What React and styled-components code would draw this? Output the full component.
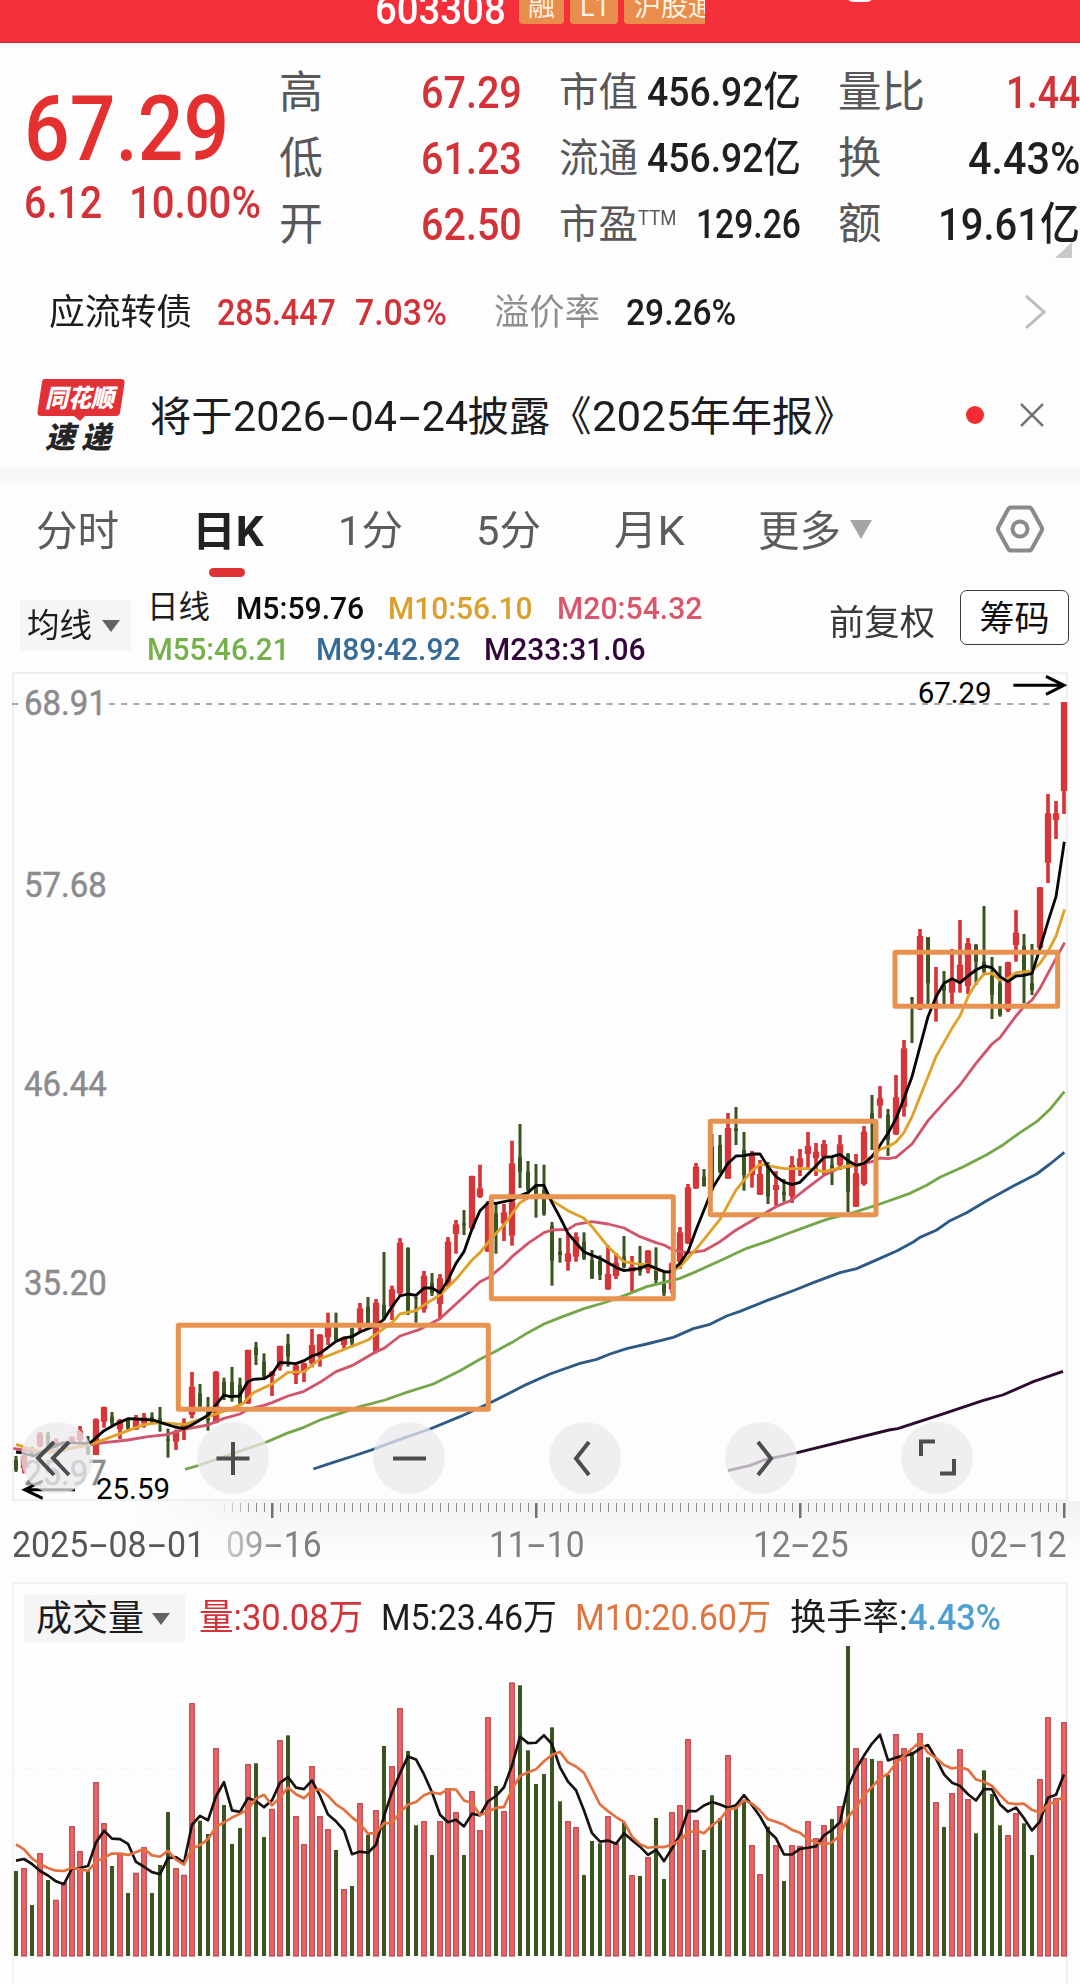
import React, { useLayoutEffect, useRef } from 'react'
import styled, { createGlobalStyle } from 'styled-components'

const GlobalStyle = createGlobalStyle`
  * {
    box-sizing: border-box;
  }
  body {
    margin: 0;
    background: #fdfdfd;
    font-family: Roboto, "Noto Sans CJK SC", sans-serif;
    line-height: 1;
    color: #1d1d1f;
  }
  svg {
    display: block;
  }
`

const RED = '#d23238'
const UP = '#d5363a'
const DOWN = '#3a551f'

/* ---------- text that is squeezed to a given width ---------- */

const FitBox = styled.span`
  display: inline-block;
  flex: none;
  width: ${p => p.$w}px;
  margin-left: ${p => p.$ml || 0}px;
  font-size: ${p => p.$size}px;
  font-weight: ${p => p.$weight || 400};
  color: ${p => p.$color || 'inherit'};
  white-space: nowrap;
`

const FitInner = styled.span`
  display: inline-block;
  transform-origin: 0 50%;
`

function Fit({ w, ml, size, weight, color, children }) {
  const ref = useRef(null)

  useLayoutEffect(() => {
    const el = ref.current
    el.style.transform = `scaleX(${w / el.offsetWidth})`
  }, [w, children])

  return (
    <FitBox $w={w} $ml={ml} $size={size} $weight={weight} $color={color}>
      <FitInner ref={ref}>{children}</FitInner>
    </FitBox>
  )
}

const Dash = styled.span`
  display: inline-block;
  width: 0.6em;
  text-align: center;
  transform: scaleX(1.9);
`

function DateText({ value }) {
  return value.split('-').map((part, i) => (
    <React.Fragment key={i}>
      {i > 0 && <Dash>-</Dash>}
      {part}
    </React.Fragment>
  ))
}

/* ---------- header ---------- */

const Header = styled.header`
  display: flex;
  align-items: flex-end;
  height: 43px;
  padding: 0 0 18px 375px;
  overflow: hidden;
  background: #f52f3a;
  border-bottom: 1px solid #c22c35;
  color: #fff;
`

const Code = styled.div`
  height: 36px;
  margin: 0 13px 0 0;
`

const Tag = styled.div`
  width: ${p => p.$w}px;
  height: 36px;
  margin-right: 6px;
  padding: 4px 0 0 ${p => p.$pad}px;
  overflow: hidden;
  border-radius: 0 0 ${p => (p.$cut ? 0 : 4)}px 4px;
  background: #e88d4c;
  color: #fff4e4;
  font-size: 27px;
  line-height: 31px;
  white-space: nowrap;
`

const Pill = styled.div`
  width: 30px;
  height: 36px;
  margin: 0 0 22px 134px;
  border-radius: 9px;
  background: #fff;
`

/* ---------- quote ---------- */

const Quote = styled.section`
  display: flex;
  height: 227px;
`

const PriceCol = styled.div`
  width: 279px;
  padding: 41px 0 0 24px;
`

const ChangeRow = styled.div`
  display: flex;
  margin-top: 5px;
`

const Stats = styled.div`
  display: grid;
  grid-template-columns: 243px 242px 242px;
  grid-auto-rows: 66px;
  column-gap: 37px;
  padding-top: 16px;
`

const Stat = styled.div`
  display: flex;
  align-items: center;
  justify-content: space-between;
  position: relative;
`

const StatLabel = styled.div`
  display: flex;
  padding-top: 2px;
  font-size: ${p => p.$size}px;
  color: #58585a;
`

const Sup = styled.span`
  align-self: flex-start;
  display: flex;
  padding-top: 3px;
`

const Corner = styled.i`
  position: absolute;
  right: 8px;
  bottom: -1px;
  border-left: 17px solid transparent;
  border-bottom: 16px solid #c9c9cb;
`

/* ---------- bond and news rows ---------- */

const BondRow = styled.section`
  display: flex;
  align-items: center;
  height: 86px;
  padding: 0 34px 0 49px;
`

const NewsRow = styled.section`
  display: flex;
  align-items: center;
  height: 112px;
  padding: 6px 36px 0 36px;
`

const NewsTitle = styled.div`
  display: flex;
  align-items: baseline;
  margin-left: 24px;
  padding-top: 5px;
  font-size: 41.3px;
`

const Push = styled.div`
  margin-left: auto;
`

const Dot = styled.i`
  width: 18px;
  height: 18px;
  margin: 0 36px 0 auto;
  border-radius: 50%;
  background: #f22c30;
`

const Band = styled.div`
  height: 13px;
  background: #f7f7f8;
`

/* ---------- tabs ---------- */

const Tabs = styled.nav`
  display: flex;
  height: 98px;
  padding: 0 36px 0 36px;
  font-size: 41px;
  color: #5c5c5e;
`

const Tab = styled.div`
  position: relative;
  display: flex;
  align-items: center;
  height: 101px;
  margin-left: ${p => p.$ml || 0}px;
  color: ${p => (p.$active ? '#222' : 'inherit')};
`

const Underline = styled.i`
  position: absolute;
  left: 17px;
  bottom: 5px;
  width: 36px;
  height: 9px;
  border-radius: 5px;
  background: #df3034;
`

const Caret = styled.i`
  margin-left: ${p => p.$ml}px;
  margin-top: ${p => p.$mt || 0}px;
  border: ${p => p.$w / 2}px solid transparent;
  border-top: ${p => p.$h}px solid ${p => p.$color};
  border-bottom: 0;
`

const HexBox = styled.div`
  margin: 24px 0 0 auto;
`

/* ---------- moving average bar ---------- */

const MaBar = styled.section`
  display: flex;
  height: 93px;
`

const Picker = styled.div`
  display: flex;
  align-items: center;
  width: ${p => p.$w}px;
  height: ${p => p.$h}px;
  margin: ${p => p.$m};
  padding: 1px 0 0 ${p => p.$pad}px;
  background: #f5f5f6;
`

const MaLines = styled.div`
  width: 698px;
  padding: 13px 0 0 16px;
`

const MaLine = styled.div`
  display: flex;
  align-items: center;
  height: 32px;
  margin-bottom: 9px;
`

const Adjust = styled.div`
  padding-top: 27px;
`

const ChipButton = styled.button`
  display: flex;
  align-items: center;
  justify-content: center;
  width: 109px;
  height: 55px;
  margin: 11px 0 0 25px;
  padding: 4px 0 0;
  border: 1.5px solid #3c3c3e;
  border-radius: 7px;
  background: #fff;
  font: inherit;
  color: #111;
`

/* ---------- chart ---------- */

const Panel = styled.section`
  position: relative;
  width: 1056px;
  height: ${p => p.$h}px;
  margin: 0 12px;
  box-shadow: inset 0 0 0 2px #efeff1;
`

const VolumePanel = styled(Panel)`
  box-shadow: inset 0 2px #f1f1f2, inset 2px 0 #f3f3f4, inset -2px 0 #efeff1;
`

const Controls = styled.div`
  position: absolute;
  left: 9px;
  top: 750px;
  display: flex;
  gap: 104px;
`

const RoundButton = styled.button`
  display: grid;
  place-items: center;
  width: 72px;
  height: 72px;
  padding: 0;
  border: 0;
  border-radius: 50%;
  background: rgba(233, 234, 236, 0.74);
`

const Axis = styled.div`
  height: 81px;
  background: linear-gradient(90deg, #fdfdfd 12%, rgba(253, 253, 253, 0) 26%),
    linear-gradient(#f1f2f3, #fdfdfd 75%);
`

const AxisLabels = styled.div`
  display: flex;
  padding: 6px 0 0 12px;
  color: #808083;
`

const FadeIn = styled.span`
  margin-left: 21px;
  mask-image: linear-gradient(90deg, rgba(0, 0, 0, 0.4), #000 60%);
`

const VolumeHead = styled.div`
  display: flex;
  align-items: center;
  height: 64px;
  padding: 8px 0 0 12px;
`

/* [color, wick top, wick bottom, body top, body bottom], three units to the pixel */
const shift = (dy, rows) => rows.map(([c, ...ys]) => [c, ...ys.map(y => y + dy)])

const candles = [
  ...shift(1800, [
    ['g', 588, 636, 600, 630], ['r', 585, 640, 588, 625], ['g', 560, 588, 565, 580], ['r', 516, 562, 520, 558],
    ['g', 516, 562, 525, 555], ['r', 535, 565, 545, 560], ['r', 545, 575, 550, 570], ['r', 528, 552, 532, 545],
    ['r', 498, 545, 512, 540], ['g', 528, 585, 545, 580], ['r', 475, 585, 478, 585], ['r', 440, 503, 441, 485],
    ['g', 456, 497, 470, 490], ['r', 477, 537, 480, 508], ['g', 475, 510, 480, 505], ['r', 465, 510, 472, 508],
    ['r', 459, 503, 472, 490], ['g', 457, 490, 470, 485], ['g', 441, 515, 475, 490], ['g', 506, 593, 538, 542],
    ['r', 509, 570, 517, 545], ['r', 475, 540, 490, 510], ['r', 336, 475, 380, 465], ['g', 372, 440, 400, 440],
    ['g', 411, 512, 440, 480], ['r', 333, 490, 336, 488], ['g', 353, 420, 366, 410], ['g', 321, 425, 366, 412],
    ['g', 353, 436, 375, 430], ['r', 269, 432, 270, 430], ['g', 246, 315, 262, 285], ['g', 280, 355, 305, 350],
    ['r', 333, 408, 336, 348], ['r', 257, 332, 258, 318], ['g', 222, 320, 252, 290], ['r', 314, 372, 316, 345],
    ['r', 308, 366, 310, 335], ['r', 207, 322, 255, 310], ['r', 222, 320, 224, 290], ['r', 158, 255, 200, 232],
    ['g', 158, 245, 200, 240], ['r', 230, 265, 232, 255], ['g', 203, 262, 205, 250], ['r', 129, 215, 145, 200],
    ['g', 111, 200, 140, 195], ['r', 117, 280, 128, 275],
  ]),
  ...shift(1260, [
    ['g', 516, 718, 675, 715], ['r', 617, 720, 628, 680], ['r', 474, 648, 488, 640], ['g', 502, 705, 504, 700],
    ['g', 650, 728, 652, 656], ['r', 573, 698, 587, 688], ['g', 579, 648, 608, 640], ['r', 582, 716, 595, 672],
    ['r', 471, 620, 485, 615], ['r', 420, 521, 433, 462], ['g', 390, 465, 430, 436], ['r', 287, 450, 288, 445],
    ['r', 254, 354, 325, 350], ['r', 363, 516, 375, 515], ['g', 372, 521, 400, 460], ['r', 372, 483, 397, 430],
    ['r', 182, 497, 250, 467], ['g', 132, 324, 232, 275], ['g', 243, 335, 275, 330], ['g', 252, 413, 320, 350],
    ['g', 254, 407, 330, 402], ['g', 426, 617, 438, 542], ['g', 474, 548, 515, 525], ['r', 459, 572, 520, 545],
    ['r', 457, 545, 470, 530], ['g', 457, 540, 485, 535], ['g', 510, 597, 540, 595], ['g', 526, 600, 542, 585],
    ['r', 496, 630, 582, 628], ['r', 519, 597, 548, 588], ['g', 468, 565, 530, 560], ['r', 528, 635, 560, 575],
    ['g', 498, 587, 550, 575], ['r', 510, 580, 512, 568], ['g', 502, 612, 565, 600], ['g', 570, 648, 610, 640],
    ['r', 547, 640, 550, 628], ['r', 441, 567, 457, 545], ['r', 312, 492, 322, 490], ['r', 249, 327, 260, 325],
    ['g', 267, 320, 290, 318], ['g', 162, 325, 200, 320],
  ]),
  ...shift(1170, [
    ['g', 255, 370, 285, 365], ['r', 189, 387, 234, 386], ['g', 171, 285, 235, 243], ['g', 246, 422, 300, 375],
    ['r', 303, 413, 315, 375], ['r', 330, 435, 372, 434], ['g', 336, 462, 345, 440], ['r', 363, 467, 405, 420],
    ['g', 387, 455, 425, 435], ['r', 318, 459, 345, 438], ['r', 297, 378, 325, 350], ['r', 246, 360, 288, 312],
    ['r', 279, 378, 305, 325], ['r', 270, 375, 282, 320], ['g', 318, 405, 345, 365], ['r', 255, 360, 283, 345],
    ['g', 309, 486, 312, 425], ['r', 312, 471, 370, 470], ['r', 228, 407, 245, 402], ['g', 135, 300, 190, 210],
    ['r', 108, 205, 145, 167], ['g', 177, 318, 195, 270], ['r', 75, 255, 142, 253],
  ]),
  ...shift(0, [
    ['r', 1140, 1370, 1165, 1340], ['g', 1011, 1149, 1014, 1018], ['r', 807, 1050, 828, 1048], ['g', 831, 1035, 832, 970],
    ['r', 921, 1085, 1030, 1045], ['g', 933, 1035, 975, 992], ['r', 867, 1035, 965, 998], ['r', 780, 998, 914, 968],
    ['r', 834, 1002, 850, 978], ['g', 852, 975, 855, 905], ['g', 738, 940, 905, 935], ['g', 891, 1077, 948, 1005],
    ['g', 918, 1070, 970, 1065], ['r', 905, 1056, 907, 1050], ['r', 750, 905, 818, 855], ['g', 822, 1030, 858, 940],
    ['g', 852, 1005, 970, 990], ['r', 681, 865, 682, 863], ['r', 402, 669, 460, 608], ['r', 423, 537, 460, 480],
    ['r', 126, 462, 126, 393],
  ]),
]

const averages = [
  {
    color: '#2d5a85',
    points: '940,2427 1000,2407 1060,2388 1120,2368 1200,2338 1290,2307 1380,2270 1468,2230 1580,2173 1650,2142 1740,2110 1790,2098 1830,2082 1880,2066 1940,2052 2020,2032 2080,2006 2130,1993 2180,1968 2220,1954 2300,1922 2385,1890 2440,1868 2520,1838 2570,1826 2640,1795 2690,1773 2740,1746 2760,1732 2810,1710 2850,1682 2900,1658 2960,1622 3040,1578 3110,1542 3150,1512 3193,1477',
  },
  {
    color: '#74a64a',
    points: '555,2428 600,2415 700,2380 800,2346 860,2320 912,2302 960,2280 1020,2260 1080,2240 1155,2220 1220,2197 1300,2172 1380,2132 1440,2098 1490,2072 1540,2045 1584,2018 1632,1992 1680,1973 1752,1946 1820,1926 1890,1900 1940,1880 2010,1863 2040,1855 2090,1834 2160,1802 2240,1765 2300,1745 2360,1722 2420,1700 2480,1678 2560,1658 2640,1632 2730,1600 2780,1576 2820,1552 2890,1520 2960,1484 3010,1454 3060,1418 3110,1385 3150,1348 3193,1295',
  },
  {
    color: '#d0546b',
    points: '40,2365 80,2372 150,2375 265,2355 312,2348 384,2340 444,2330 500,2324 551,2308 624,2295 672,2275 720,2262 744,2248 792,2236 816,2228 864,2208 912,2194 960,2167 1008,2135 1056,2117 1128,2075 1152,2065 1200,2028 1260,2008 1320,1976 1368,1932 1440,1865 1470,1850 1512,1815 1536,1790 1584,1750 1632,1718 1656,1710 1704,1708 1728,1693 1776,1685 1824,1692 1872,1704 1920,1730 1968,1748 1992,1755 2020,1770 2064,1779 2112,1772 2160,1745 2208,1710 2256,1682 2328,1640 2376,1620 2424,1582 2472,1546 2520,1523 2568,1516 2616,1505 2640,1494 2664,1496 2688,1492 2736,1452 2784,1382 2832,1328 2880,1275 2928,1210 2976,1152 3000,1133 3048,1068 3072,1040 3096,1020 3120,985 3144,940 3168,895 3194,848',
  },
  {
    color: '#dfa127',
    points: '48,2353 75,2362 110,2372 150,2378 190,2370 265,2354 288,2348 336,2330 384,2312 432,2294 480,2288 528,2292 555,2293 600,2278 648,2262 696,2245 730,2230 760,2198 816,2172 864,2137 912,2135 960,2097 1008,2078 1032,2068 1104,2040 1152,2005 1176,1988 1200,1962 1248,1952 1272,1935 1320,1905 1368,1858 1416,1800 1440,1778 1464,1748 1488,1720 1512,1695 1560,1628 1584,1614 1608,1605 1632,1605 1656,1622 1704,1652 1752,1675 1776,1700 1800,1730 1824,1760 1872,1805 1920,1813 1944,1813 1968,1828 2010,1838 2040,1820 2088,1768 2160,1678 2208,1590 2256,1532 2280,1513 2304,1517 2352,1526 2424,1526 2472,1535 2544,1518 2580,1515 2616,1488 2640,1468 2664,1460 2688,1446 2712,1418 2736,1370 2760,1310 2808,1190 2856,1105 2880,1068 2904,1010 2928,970 2952,942 2976,940 3000,960 3024,955 3048,938 3096,933 3120,910 3144,875 3168,828 3194,748',
  },
  {
    color: '#060606',
    points: '48,2376 62,2378 100,2388 150,2365 190,2348 265,2350 275,2345 312,2312 348,2292 385,2276 460,2280 480,2287 525,2301 551,2306 575,2295 624,2266 648,2234 672,2205 690,2210 718,2208 743,2166 760,2158 792,2156 815,2143 840,2107 888,2111 912,2102 936,2088 960,2080 1008,2044 1032,2034 1056,2030 1080,2016 1128,1996 1152,1978 1176,1940 1200,1908 1224,1902 1248,1906 1272,1884 1296,1884 1320,1898 1344,1860 1368,1810 1392,1775 1416,1707 1440,1652 1464,1628 1488,1630 1536,1620 1565,1605 1584,1598 1608,1576 1632,1576 1656,1628 1680,1672 1704,1720 1752,1776 1800,1795 1848,1822 1872,1832 1920,1825 1944,1815 1968,1825 1992,1835 2010,1836 2040,1810 2064,1775 2088,1710 2140,1580 2184,1510 2208,1488 2232,1487 2256,1482 2280,1482 2304,1520 2328,1550 2352,1566 2376,1574 2400,1567 2424,1542 2448,1518 2472,1492 2496,1490 2520,1483 2544,1502 2568,1516 2592,1510 2616,1490 2640,1456 2664,1420 2688,1376 2712,1315 2736,1250 2760,1160 2784,1070 2808,1010 2832,970 2856,956 2880,968 2904,948 2928,930 2952,918 2976,923 3000,950 3024,965 3048,948 3072,946 3096,940 3120,865 3144,785 3168,710 3193,545',
  },
  {
    color: '#2b0a2c',
    points: '2184,2432 2251,2416 2292,2400 2392,2378 2667,2310 2693,2306 2834,2260 2948,2222 3008,2205 3100,2165 3189,2134',
  },
]

const boxes = [
  [528, 1989, 1472, 2255],
  [1467, 1603, 2027, 1923],
  [2124, 1377, 2635, 1671],
  [2678, 870, 3180, 1046],
]

const prices = [
  ['68.91', 165],
  ['57.68', 711],
  ['46.44', 1309],
  ['35.20', 1904],
  ['25.97', 2474],
]

function PriceChart() {
  return (
    <svg width="1056" height="829" viewBox="36 36 3168 2487" fontFamily="Roboto, sans-serif">
      <line x1="36" x2="3165" y1="132" y2="132" stroke="#8c8c8e" strokeWidth="5" strokeDasharray="18 18.4" />
      <rect x="68" y="88" width="256" height="84" fill="#fdfdfd" />
      <g fill="#8b8b8e" stroke="#8b8b8e" strokeWidth="1.5" fontSize="106">
        {prices.map(([label, y]) => (
          <text key={label} x="72" y={y} textLength="248" lengthAdjust="spacingAndGlyphs">{label}</text>
        ))}
      </g>
      {candles.map(([c, top, bottom, bodyTop, bodyBottom], i) => {
        const x = 48 + 24 * i
        const w = c === 'r' ? 19 : 12
        return (
          <g key={i} fill={c === 'r' ? UP : DOWN}>
            <rect x={x - (c === 'r' ? 5.5 : 4.5)} y={top} width={c === 'r' ? 11 : 9} height={bottom - top} />
            <rect x={x - w / 2} y={bodyTop} width={w} height={bodyBottom - bodyTop} />
          </g>
        )
      })}
      {averages.map(line => (
        <polyline key={line.color} points={line.points} fill="none" stroke={line.color} strokeWidth="8.5" strokeLinejoin="round" />
      ))}
      {boxes.map(([x1, y1, x2, y2]) => (
        <rect key={x1} x={x1 + 7} y={y1 + 7} width={x2 - x1 - 14} height={y2 - y1 - 14} rx="2" fill="none" stroke="#e8924f" strokeWidth="15" />
      ))}
      <g fill="#000" fontSize="90">
        <text x="2753" y="130" textLength="222" lengthAdjust="spacingAndGlyphs">67.29</text>
        <text x="288" y="2518" textLength="222" lengthAdjust="spacingAndGlyphs">25.59</text>
      </g>
      <g fill="none" stroke="#000" strokeWidth="9">
        <path d="M3040 76h150M3138 49l54 27-54 27" />
        <path d="M225 2489H76M128 2463l-54 26 54 26" />
      </g>
    </svg>
  )
}

/* bar tops, measured down from the top of the volume panel */
const volumes = (
  'g903 r895 g1005 r850 g930 r990 r938 r769 r844 g900 r637 r760 g888 r853 g969 r909 r832 g969 g885 g726 r895 r915 ' +
  'r400 g752 g792 r535 g705 g822 g774 r583 g580 g801 r717 r511 g496 r739 r823 r589 r739 r778 g840 r958 g948 r700 ' +
  'g795 r721 g528 r589 r415 g543 g766 r754 g855 r754 r655 r727 g855 r664 r781 r442 g648 r724 r338 g346 g541 g642 ' +
  'g612 g472 g694 r754 r772 g915 g813 g820 r739 r820 g757 r916 g918 r862 g744 g927 r727 r706 r508 r751 g840 g676 ' +
  'g744 r556 g712 g690 r826 r913 g770 r826 g933 r826 r828 r754 r805 r766 g747 r709 g228 r535 r565 g567 r574 g615 ' +
  'r493 r535 g545 r490 g562 r697 g771 r670 r538 r688 g790 g601 g672 g766 r796 r730 g760 g855 r628 r442 r685 r457'
).split(' ').map(s => ({ up: s[0] === 'r', y: Number(s.slice(1)) }))

const movingAverage = (n, lead) =>
  volumes
    .map((v, i) => {
      const y = i < lead.length ? lead[i] : volumes.slice(i - n + 1, i + 1).reduce((sum, d) => sum + d.y, 0) / n
      return `${48 + 24 * i},${y.toFixed(1)}`
    })
    .join(' ')

const volumeMa5 = movingAverage(5, [872, 867, 882, 903])
const volumeMa10 = movingAverage(10, [823, 838, 865, 882, 894, 902, 903, 893, 898])

function VolumeChart() {
  return (
    <svg width="1056" height="311" viewBox="36 228 3168 933">
      <line x1="36" x2="3204" y1="596" y2="596" stroke="#f4f4f4" strokeWidth="3" strokeDasharray="18 18" />
      {volumes.map((v, i) => {
        const x = 48 + 24 * i
        return v.up
          ? <rect key={i} x={x - 7} y={v.y + 1} width="14" height={1157 - v.y} fill="#ee6462" stroke="#b34a50" strokeWidth="3.5" />
          : <rect key={i} x={x - 6} y={v.y} width="12" height={1158 - v.y} fill={DOWN} />
      })}
      <polyline points={volumeMa5} fill="none" stroke="#17110f" strokeWidth="8" strokeLinejoin="round" />
      <polyline points={volumeMa10} fill="none" stroke="#e4703f" strokeWidth="8" strokeLinejoin="round" />
    </svg>
  )
}

function AxisTicks() {
  const ticks = []
  for (let i = 26; i < 132; i++) {
    const major = i % 33 === 32
    ticks.push(
      <rect
        key={i}
        x={16 + 8 * i - (major ? 1 : 0)}
        y="2"
        width={major ? 2.5 : 1}
        height={major ? 15 : 9}
        fill={major ? '#707073' : '#8b8b8e'}
        opacity={major ? 1 : Math.min(1, (i - 25) / 5)}
      />
    )
  }
  return <svg width="1080" height="20">{ticks}</svg>
}

const controlPaths = [
  'M21 3L5 19l16 17M36 3L20 19l16 17',
  'M24 3v33M7.500 19.500h33',
  'M8 19.500h33',
  'M28 3L15 19.500 28 36',
  'M21 3l13 16.500L21 36',
  'M8 17V2.500h14M41 20v14.500H27',
]

function Logo() {
  return (
    <svg width="90" height="74" viewBox="0 0 90 74">
      <path d="M8 1h77q4 0 3.500 4l-4.500 30q-.6 3-4 3H49l-5 5-6-5H5q-4 0-3.500-4L6 4q.5-3 2-3z" fill="#e23136" />
      <g fontFamily="Noto Sans CJK SC, sans-serif" fontWeight="900" fontStyle="italic">
        <text x="9" y="29" fontSize="25" fill="#fff" textLength="69" lengthAdjust="spacingAndGlyphs">同花顺</text>
        <text x="9" y="70" fontSize="30" fill="#242426" textLength="66">速递</text>
      </g>
    </svg>
  )
}

const stats = [
  { label: '高', value: '67.29', w: 101, red: true },
  { label: '市值', value: '456.92亿', w: 154 },
  { label: '量比', value: '1.44', w: 74, red: true },
  { label: '低', value: '61.23', w: 101, red: true },
  { label: '流通', value: '456.92亿', w: 154 },
  { label: '换', value: '4.43%', w: 112 },
  { label: '开', value: '62.50', w: 101, red: true },
  { label: '市盈', sup: 'TTM', value: '129.26', w: 105 },
  { label: '额', value: '19.61亿', w: 142, corner: true },
]

export default function App() {
  return (
    <>
      <GlobalStyle />
      <Header>
        <Code><Fit w={131} size={43} weight={500}>603308</Fit></Code>
        <Tag $w={45} $pad={9}>融</Tag>
        <Tag $w={48} $pad={10}>L1</Tag>
        <Tag $w={81} $pad={10} $cut>沪股通</Tag>
        <Pill />
      </Header>

      <Quote>
        <PriceCol>
          <Fit w={205} size={91} weight={500} color="#e4302f">67.29</Fit>
          <ChangeRow>
            <Fit w={78} size={45} weight={500} color={RED}>6.12</Fit>
            <Fit w={132} ml={27} size={45} weight={500} color={RED}>10.00%</Fit>
          </ChangeRow>
        </PriceCol>
        <Stats>
          {stats.map((s, i) => (
            <Stat key={i}>
              <StatLabel $size={[44, 39.5, 43.5][i % 3]}>
                {s.label}
                {s.sup && <Sup><Fit w={38} size={20}>{s.sup}</Fit></Sup>}
              </StatLabel>
              <Fit w={s.w} size={i % 3 === 1 ? 41 : 45} weight={500} color={s.red ? RED : '#1f1f21'}>{s.value}</Fit>
              {s.corner && <Corner />}
            </Stat>
          ))}
        </Stats>
      </Quote>

      <BondRow>
        <Fit w={143} size={36}>应流转债</Fit>
        <Fit w={119} ml={25} size={36} weight={500} color={RED}>285.447</Fit>
        <Fit w={92} ml={19} size={36} weight={500} color={RED}>7.03%</Fit>
        <Fit w={106} ml={47} size={36} color="#8e8e90">溢价率</Fit>
        <Fit w={110} ml={26} size={36} weight={500}>29.26%</Fit>
        <Push>
          <svg width="22" height="36" fill="none" stroke="#bdbdbf" strokeWidth="3"><path d="M2 1l18 16L2 33" /></svg>
        </Push>
      </BondRow>

      <NewsRow>
        <Logo />
        <NewsTitle>
          将于<Fit w={235} size={42}><DateText value="2026-04-24" /></Fit>披露《<Fit w={98} size={42}>2025</Fit>年年报》
        </NewsTitle>
        <Dot />
        <svg width="24" height="24" stroke="#77777a" strokeWidth="2.500"><path d="M1 1l22 22M23 1L1 23" /></svg>
      </NewsRow>

      <Band />

      <Tabs>
        <Tab>
          <Fit w={83} size={42}>分时</Fit>
        </Tab>
        <Tab $ml={73} $active>
          <Fit w={72} size={42} weight={700}>日K</Fit>
          <Underline />
        </Tab>
        <Tab $ml={74}><Fit w={65} size={41}>1分</Fit></Tab>
        <Tab $ml={73}><Fit w={65} size={41}>5分</Fit></Tab>
        <Tab $ml={73}><Fit w={71} size={41}>月K</Fit></Tab>
        <Tab $ml={73}>
          <Fit w={83} size={42}>更多</Fit>
          <Caret $ml={9} $mt={-4} $w={22} $h={19} $color="#a5a5a7" />
        </Tab>
        <HexBox>
          <svg width="48" height="48" fill="none" stroke="#8a8a8d" strokeWidth="4" strokeLinejoin="round">
            <path d="M15 2.500h18q2 0 3 2L45.500 22q1 2 0 4L36 43.500q-1 2-3 2H15q-2 0-3-2L2.500 26q-1-2 0-4L12 4.500q1-2 3-2z" />
            <circle cx="24" cy="24" r="7.500" />
          </svg>
        </HexBox>
      </Tabs>

      <MaBar>
        <Picker $w={111} $h={50} $m="21px 0 0 20px" $pad={7}>
          <Fit w={65} size={33}>均线</Fit>
          <Caret $ml={10} $w={18} $h={12} $color="#636366" />
        </Picker>
        <MaLines>
          <MaLine>
            <Fit w={63} size={31.5}>日线</Fit>
            <Fit w={128} ml={26} size={32} weight={500} color="#0c0c0c">M5:59.76</Fit>
            <Fit w={144} ml={24} size={32} weight={500} color="#d9a02c">M10:56.10</Fit>
            <Fit w={145} ml={25} size={32} weight={500} color="#d9566b">M20:54.32</Fit>
          </MaLine>
          <MaLine>
            <Fit w={142} size={32} weight={500} color="#76b04b">M55:46.21</Fit>
            <Fit w={144} ml={27} size={32} weight={500} color="#356b96">M89:42.92</Fit>
            <Fit w={162} ml={24} size={32} weight={500} color="#33063a">M233:31.06</Fit>
          </MaLine>
        </MaLines>
        <Adjust><Fit w={106} size={35} color="#3a3a3c">前复权</Fit></Adjust>
        <ChipButton><Fit w={70} size={35}>筹码</Fit></ChipButton>
      </MaBar>

      <Panel $h={829}>
        <PriceChart />
        <Controls>
          {controlPaths.map(d => (
            <RoundButton key={d}>
              <svg width="48" height="39" fill="none" stroke="#4d4d4f" strokeWidth="4"><path d={d} /></svg>
            </RoundButton>
          ))}
        </Controls>
      </Panel>

      <Axis>
        <AxisTicks />
        <AxisLabels>
          <Fit w={193} size={36} color="#58585a"><DateText value="2025-08-01" /></Fit>
          <FadeIn><Fit w={96} size={36}><DateText value="09-16" /></Fit></FadeIn>
          <Fit w={96} ml={167} size={36}><DateText value="11-10" /></Fit>
          <Fit w={96} ml={168} size={36}><DateText value="12-25" /></Fit>
          <Fit w={97} ml={121} size={36}><DateText value="02-12" /></Fit>
        </AxisLabels>
      </Axis>

      <VolumePanel $h={402}>
        <VolumeHead>
          <Picker $w={161} $h={47} $m="0" $pad={12}>
            <Fit w={108} size={36}>成交量</Fit>
            <Caret $ml={8} $w={19} $h={12} $color="#636366" />
          </Picker>
          <Fit w={164} ml={14} size={36} color={RED}>量:30.08万</Fit>
          <Fit w={176} ml={18} size={36}>M5:23.46万</Fit>
          <Fit w={196} ml={18} size={36} color="#e0743f">M10:20.60万</Fit>
          <Fit w={118} ml={19} size={36}>换手率:</Fit>
          <Fit w={93} size={36} weight={500} color="#4f9fd0">4.43%</Fit>
        </VolumeHead>
        <VolumeChart />
      </VolumePanel>
    </>
  )
}
